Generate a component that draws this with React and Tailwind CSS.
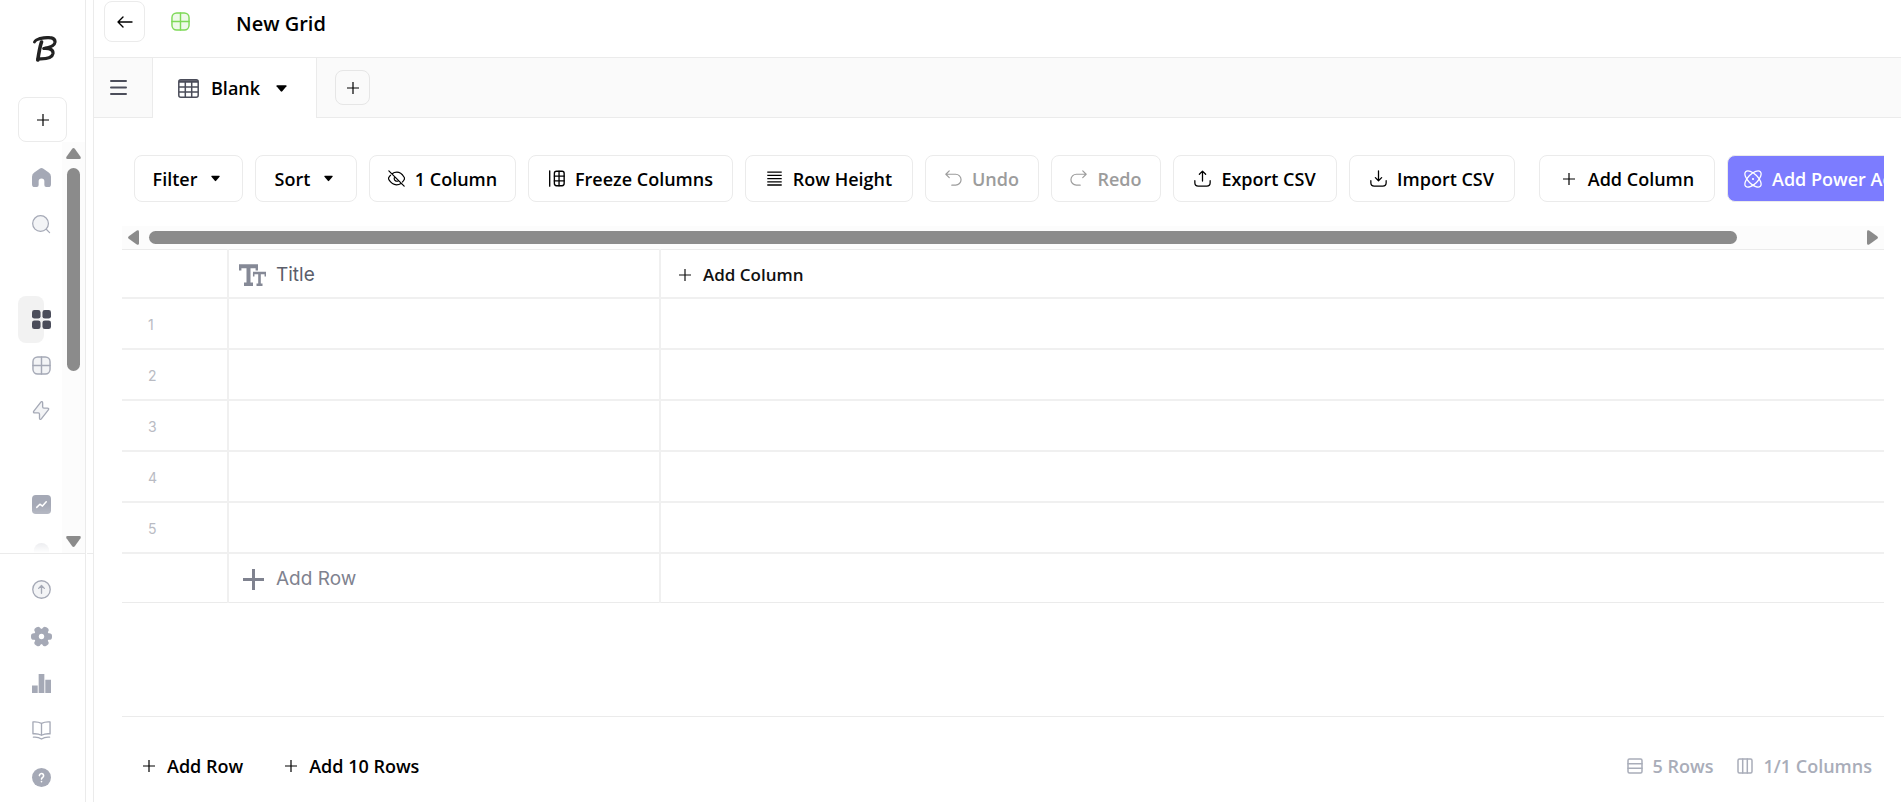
import React, { useState } from "react";

function Svg({ size = 20, children, className = "", box = 20, ...rest }) {
  return (
    <svg
      width={size}
      height={size}
      viewBox={`0 0 ${box} ${box}`}
      fill="none"
      stroke="currentColor"
      strokeLinecap="round"
      strokeLinejoin="round"
      aria-hidden="true"
      className={`shrink-0 ${className}`}
      {...rest}
    >
      {children}
    </svg>
  );
}

const Plus = ({ size = 12, width = 1.2 }) => (
  <Svg size={size} box={12} strokeWidth={width} strokeLinecap="butt">
    <path d="M6 0v12M0 6h12" />
  </Svg>
);

const Caret = ({ size = 9 }) => (
  <Svg size={size} box={10} stroke="none">
    <path d="M1 2h8q1 0 .5 1L5.700 7.600q-.7.700-1.400 0L.5 3Q0 2 1 2z" fill="currentColor" />
  </Svg>
);

const Triangle = ({ className = "" }) => (
  <svg width="15" height="11" viewBox="0 0 15 11" aria-hidden="true" className={`shrink-0 ${className}`}>
    <path d="M6.200.8q1.300-1.500 2.600 0l5.700 8q.9 2-1 2.200h-12q-1.900-.2-1-2.200z" fill="#8b8b8b" />
  </svg>
);

const GridIcon = () => (
  <Svg size={19} strokeWidth="1.500">
    <rect x="1" y="1" width="18" height="18" rx="5" fill="currentColor" fillOpacity="0.130" />
    <path d="M10 1v18M1 10h18" />
  </Svg>
);

const HomeIcon = () => (
  <Svg size={19} stroke="none">
    <path
      d="M8 .8a3.500 3.500 0 0 1 4 0l5.600 4A5.500 5.500 0 0 1 20 9.300V17a3 3 0 0 1-3 3h-2a2 2 0 0 1-2-2v-4a3 3 0 0 0-6 0v4a2 2 0 0 1-2 2H3a3 3 0 0 1-3-3V9.300a5.500 5.500 0 0 1 2.400-4.500z"
      fill="currentColor"
    />
  </Svg>
);

const SearchIcon = () => (
  <Svg size={19} strokeWidth="1.300">
    <circle cx="9" cy="9" r="8.300" fill="currentColor" fillOpacity="0.130" />
    <path d="M15 15l3.500 3.500" />
  </Svg>
);

const AppsIcon = () => (
  <Svg size={19} stroke="none">
    <g fill="#4b4d5a">
      <rect width="9" height="9" rx="2.500" />
      <rect x="11" width="9" height="9" rx="2.500" />
      <rect y="11" width="9" height="9" rx="2.500" />
      <rect x="11" y="11" width="9" height="9" rx="2.500" />
    </g>
  </Svg>
);

const BoltIcon = () => (
  <Svg size={19} strokeWidth="1.400">
    <path
      d="M9.300 1.200c.9-1 1.900-.5 1.900.7v4.200q0 1.400 1.300 1.400h3.700c1.300 0 1.700.9 1 1.800l-7.400 9.500c-.9 1-1.900.5-1.900-.7v-4.200q0-1.400-1.300-1.400H2.900c-1.300 0-1.700-.9-1-1.800z"
      fill="currentColor"
      fillOpacity="0.130"
    />
  </Svg>
);

const ChartIcon = () => (
  <Svg size={19} strokeWidth="1.600">
    <rect width="20" height="20" rx="4" fill="currentColor" stroke="none" />
    <path d="M5 13l3.300-3.300 2.700 2 4-4.500" stroke="#fff" />
  </Svg>
);

const DotIcon = () => (
  <Svg size={19} stroke="none">
    <circle cx="10" cy="10" r="8" fill="currentColor" />
  </Svg>
);

const UpgradeIcon = () => (
  <Svg size={19} strokeWidth="1.400">
    <circle cx="10" cy="10" r="9.200" fill="currentColor" fillOpacity="0.130" />
    <path d="M10 14V6M7 8.800L10 5.800l3 3" />
  </Svg>
);

const GearIcon = () => (
  <Svg size={21} box={22} stroke="none">
    <g fill="currentColor">
      <circle cx="11" cy="11" r="8" />
      <rect x="0" y="7.500" width="22" height="7" rx="3" />
      <rect x="0" y="7.500" width="22" height="7" rx="3" transform="rotate(60 11 11)" />
      <rect x="0" y="7.500" width="22" height="7" rx="3" transform="rotate(120 11 11)" />
    </g>
    <circle cx="11" cy="11" r="2.800" fill="#fff" />
  </Svg>
);

const BarsIcon = () => (
  <Svg size={19} stroke="none">
    <path d="M0 12h6v8H0zM7 0h6v20H7zM14 6h6v14h-6z" fill="currentColor" />
  </Svg>
);

const BookIcon = () => (
  <Svg size={19} strokeWidth="1.400">
    <path d="M10 2.500Q6 .5 1 1v12.500q5-.5 9 1.500 4-2 9-1.500V1q-5-.5-9 1.500zM10 2.500V15M1.500 17q5-.5 8.500 2 3.500-2.500 8.500-2" />
  </Svg>
);

const HelpIcon = () => (
  <Svg size={19} strokeWidth="1.700">
    <circle cx="10" cy="10" r="10" fill="currentColor" stroke="none" />
    <path d="M7.800 8a2.200 2.200 0 1 1 3.400 1.900Q10 10.500 10 11.700M10 14.300v.1" stroke="#fff" />
  </Svg>
);

const EyeOffIcon = () => (
  <Svg size={17} strokeWidth="1.400">
    <path d="M5 4.400Q7 2.600 10.500 2.600c4 0 6.200 2.400 8.300 5.600q1.200 1.800 0 3.600-.8 1.300-1.800 2.300M3 6.200Q2 7.200 1.200 8.300q-1.100 1.700 0 3.400c2 3.200 4.800 5.700 8.800 5.700q3 0 5.200-1.500M1 1l18 18M7.500 9q-.7 2.700 1.400 3.800 1.400.8 3 .1M9.500 9.500l1.600 1.600" />
  </Svg>
);

const FreezeIcon = () => (
  <Svg size={17} strokeWidth="1.600">
    <path d="M2 1v18M13 1.500v17M7.500 7.200h11.500M7.500 12.800h11.500" />
    <rect x="7.500" y="1.500" width="11.500" height="17" rx="2.500" />
  </Svg>
);

const RowHeightIcon = () => (
  <Svg size={17} strokeWidth="1.600" strokeLinecap="butt">
    <path d="M1.500 2.500h17M1.500 6.300h17M1.500 10.100h17M1.500 13.900h17M1.500 17.700h17" />
  </Svg>
);

const UndoIcon = ({ className = "" }) => (
  <Svg size={17} strokeWidth="1.400" className={className}>
    <path d="M5 1L1 5l4 4M1.500 5H12.500a6.200 6.200 0 0 1 0 12.800H8" />
  </Svg>
);

const ExportIcon = () => (
  <Svg size={17} strokeWidth="1.500">
    <path d="M1 12.500v2.500q0 4 4 4h10q4 0 4-4v-2.500M10 13V1.500M6.300 5L10 1.300 13.700 5" />
  </Svg>
);

const ImportIcon = () => (
  <Svg size={17} strokeWidth="1.500">
    <path d="M1 12.500v2.500q0 4 4 4h10q4 0 4-4v-2.500M10 1v11.500M6.300 9L10 12.700 13.700 9" />
  </Svg>
);

const AtomIcon = () => (
  <Svg size={18} strokeWidth="1.400">
    <ellipse cx="10" cy="10" rx="11.500" ry="5.500" transform="rotate(45 10 10)" />
    <ellipse cx="10" cy="10" rx="11.500" ry="5.500" transform="rotate(-45 10 10)" />
    <circle cx="10" cy="10" r="1.200" fill="currentColor" stroke="none" />
  </Svg>
);

const TextTypeIcon = () => (
  <svg width="27" height="22" viewBox="0 0 27 22" aria-hidden="true" className="shrink-0" stroke="#858996" fill="none">
    <path d="M0 2.200h19M9.500 2v19M5 20.500h9" strokeWidth="4" />
    <path d="M1.200 2v4.500M17.800 2v4.500" strokeWidth="2.400" />
    <path d="M14 9h13M20.500 9v12M17.500 20.800h6" strokeWidth="2.600" />
    <path d="M14.700 9v3.500M26.300 9v3.500" strokeWidth="1.500" />
  </svg>
);

const TableIcon = () => (
  <svg width="21" height="19" viewBox="0 0 21 19" aria-hidden="true" className="shrink-0" stroke="#4b4d5a" fill="none" strokeWidth="1.500">
    <rect x=".8" y=".8" width="19.400" height="17.400" rx="2" />
    <path d="M1 2.500h19" strokeWidth="2.500" />
    <path d="M7.300 3v15M13.700 3v15M1 8h19M1 13h19" />
  </svg>
);

const RowsIcon = ({ className = "" }) => (
  <Svg size={16} box={16} strokeWidth="1.500" className={className}>
    <rect x="1" y="1" width="14" height="14" rx="1.500" />
    <path d="M1 5.700h14M1 10.300h14" />
  </Svg>
);

const mainNav = [
  { label: "Home", Icon: HomeIcon, cell: "h-[47px]" },
  { label: "Search", Icon: SearchIcon, cell: "h-[47px] mb-12" },
  { label: "Apps", Icon: AppsIcon, cell: "h-[47px] rounded-lg bg-[#f2f2f2]" },
  { label: "Grids", Icon: GridIcon, cell: "h-[45px]" },
  { label: "Automations", Icon: BoltIcon, cell: "h-[45px] mb-12" },
  { label: "Analytics", Icon: ChartIcon, cell: "h-[47px]" },
  { label: "More", Icon: DotIcon, cell: "h-[45px]" },
];

const footerNav = [
  { label: "Upgrade", Icon: UpgradeIcon },
  { label: "Settings", Icon: GearIcon },
  { label: "Usage", Icon: BarsIcon },
  { label: "Docs", Icon: BookIcon },
  { label: "Help", Icon: HelpIcon },
];

function Sidebar() {
  return (
    <aside className="flex w-[94px] shrink-0 border-r border-[#ebebeb] text-[#a5a9b6]">
      <div className="flex w-[86px] flex-col border-r border-[#ebebeb]">
        <div className="flex h-[97px] shrink-0 items-center pl-[33px]">
          <svg width="24" height="26" viewBox="0 0 24 26" role="img" aria-label="Logo" fill="none" stroke="#222" strokeLinecap="round" strokeLinejoin="round">
            <path d="M1.500 6Q2.500 3.500 8 2.500" strokeWidth="2.800" />
            <path d="M7 2.500Q22.500-.5 22 6.200 21.500 11 11 12.500" strokeWidth="3.200" />
            <path d="M11 12.500q9.500-.5 9 5Q19 23.500 5 22.800" strokeWidth="3.200" />
            <path d="M8.500 6Q6.500 12 4.800 24" strokeWidth="3.600" />
          </svg>
        </div>
        <button
          type="button"
          aria-label="Create"
          className="ml-[18px] flex h-[45px] w-[49px] shrink-0 items-center justify-center rounded-lg border border-[#ebebeb] text-black"
        >
          <Plus />
        </button>

        <div className="relative flex min-h-0 flex-1 overflow-hidden">
          <nav className="flex flex-1 flex-col pt-3 pl-[18px]">
            {mainNav.map(({ label, Icon, cell }) => (
              <a key={label} href="#" aria-label={label} className={`flex w-[26px] shrink-0 items-center pl-[14px] ${cell}`}>
                <Icon />
              </a>
            ))}
          </nav>
          <div className="absolute inset-x-0 bottom-0 h-12 bg-linear-to-t from-white to-transparent" />
          <div className="relative flex w-[23px] flex-col items-center bg-[#fcfcfc] py-[6px]">
            <Triangle />
            <div className="mt-[9px] h-[203px] w-[13px] rounded-full bg-[#8b8b8b]" />
            <Triangle className="mt-auto rotate-180" />
          </div>
        </div>

        <nav className="flex shrink-0 flex-col border-t border-[#ebebeb] pt-3 pb-px">
          {footerNav.map(({ label, Icon }) => (
            <a key={label} href="#" aria-label={label} className="flex h-[47px] w-[83px] items-center justify-center">
              <Icon />
            </a>
          ))}
        </nav>
      </div>
      <div className="ml-px flex flex-1 flex-col justify-end">
        <div className="h-[249px] border-t border-[#ebebeb]" />
      </div>
    </aside>
  );
}

function ToolButton({ icon, children, caret, disabled, className = "" }) {
  return (
    <button
      type="button"
      disabled={disabled}
      className={`flex h-[47px] shrink-0 items-center justify-center gap-[10px] rounded-lg border border-[#ebebeb] px-4 whitespace-nowrap disabled:text-[#9c9c9c] ${className}`}
    >
      {icon}
      {children}
      {caret && (
        <span className="px-1">
          <Caret />
        </span>
      )}
    </button>
  );
}

function Toolbar() {
  return (
    <div className="flex h-[108px] shrink-0 items-center gap-3 overflow-hidden pt-[13px] pl-3 text-lg font-semibold">
      <ToolButton caret className="min-w-[109px]">Filter</ToolButton>
      <ToolButton caret className="min-w-[102px]">Sort</ToolButton>
      <ToolButton icon={<EyeOffIcon />} className="min-w-[147px]">1 Column</ToolButton>
      <ToolButton icon={<FreezeIcon />} className="min-w-[205px]">Freeze Columns</ToolButton>
      <ToolButton icon={<RowHeightIcon />} className="min-w-[168px]">Row Height</ToolButton>
      <ToolButton icon={<UndoIcon />} disabled className="min-w-[114px]">Undo</ToolButton>
      <ToolButton icon={<UndoIcon className="-scale-x-100" />} disabled className="min-w-[110px]">Redo</ToolButton>
      <ToolButton icon={<ExportIcon />} className="min-w-[164px]">Export CSV</ToolButton>
      <ToolButton icon={<ImportIcon />} className="min-w-[166px]">Import CSV</ToolButton>
      <ToolButton icon={<span className="px-[3px]"><Plus /></span>} className="ml-3 min-w-[176px]">Add Column</ToolButton>
      <ToolButton icon={<AtomIcon />} className="border-[#7c7cff] bg-[#7c7cff] text-white">Add Power Action</ToolButton>
    </div>
  );
}

function GridTable({ rows, onAddRow }) {
  return (
    <table className="w-full table-fixed border-collapse border-t border-[#ebebeb] text-left">
      <colgroup>
        <col className="w-[106px]" />
        <col className="w-[432px]" />
        <col />
      </colgroup>
      <thead>
        <tr className="h-[48px] border-b-2 border-[#f0f0f0]">
          <th aria-label="Row number" />
          <th className="border-x-2 border-[#f0f0f0] px-[10px] pt-[3px] font-['Inter',sans-serif] text-[19px] font-normal text-[#5b5e6b]">
            <span className="flex items-center gap-[10px]">
              <TextTypeIcon />
              Title
            </span>
          </th>
          <th className="px-[18px] pt-[3px] text-[17px] font-semibold text-[#111]">
            <button type="button" className="flex items-center gap-3">
              <Plus />
              Add Column
            </button>
          </th>
        </tr>
      </thead>
      <tbody>
        {rows.map((row) => (
          <tr key={row} className="h-[51px] border-b-2 border-[#f0f0f0]">
            <td className="pt-[3px] pl-[26px] font-['Inter',sans-serif] text-sm text-[#b9bbc3]">{row}</td>
            <td className="border-x-2 border-[#f0f0f0]" />
            <td />
          </tr>
        ))}
        <tr className="h-[50px] border-b border-[#ebebeb]">
          <td />
          <td className="border-x-2 border-[#f0f0f0] px-[14px] pt-[3px] font-['Inter',sans-serif] text-[19px] text-[#7f828f]">
            <button type="button" onClick={onAddRow} className="flex items-center gap-3">
              <Plus size={21} width={1.7} />
              Add Row
            </button>
          </td>
          <td />
        </tr>
      </tbody>
    </table>
  );
}

export default function App() {
  const [rows, setRows] = useState([1, 2, 3, 4, 5]);

  const addRows = (count) => {
    setRows((prev) => [...prev, ...Array.from({ length: count }, (_, i) => prev.length + i + 1)]);
  };

  return (
    <div className="flex h-screen overflow-hidden bg-white font-['Open_Sans','Noto_Sans',sans-serif] text-black">
      <Sidebar />

      <main className="flex min-w-0 flex-1 flex-col">
        {/* HEADER */}
        <header className="flex h-[57px] shrink-0 items-start pt-px pl-[10px]">
          <button type="button" aria-label="Back" className="flex size-[41px] items-center justify-center rounded-lg border border-[#ebebeb]">
            <Svg size={16} box={16} strokeWidth="1.400">
              <path d="M15 8H1M6 3L1 8l5 5" />
            </Svg>
          </button>
          <span className="ml-[26px] flex h-[41px] items-center text-[#7ed957]">
            <GridIcon />
          </span>
          <h1 className="ml-[46px] text-xl leading-[46px] font-semibold">New Grid</h1>
        </header>

        {/* TABS */}
        <div className="flex h-[61px] shrink-0 border-t border-[#ebebeb] bg-[#fafafa]">
          <button type="button" aria-label="Menu" className="flex w-[59px] items-center border-r border-b border-[#ebebeb] pl-4 text-[#4b4d5a]">
            <Svg size={17} box={17} strokeWidth="2">
              <path d="M1 2h15M1 8.500h15M1 15h15" />
            </Svg>
          </button>
          <button type="button" className="flex min-w-[163px] items-center gap-3 bg-white px-[25px] text-lg font-semibold">
            <TableIcon />
            Blank
            <span className="px-1">
              <Caret size={11} />
            </span>
          </button>
          <div className="flex flex-1 items-center border-b border-l border-[#ebebeb] pl-[18px]">
            <button type="button" aria-label="Add tab" className="flex size-[35px] items-center justify-center rounded-lg border border-[#e6e6e6]">
              <Plus />
            </button>
          </div>
        </div>

        <div className="flex min-h-0 flex-1 flex-col pr-[17px] pl-7">
          <Toolbar />

          <div className="flex h-[23px] shrink-0 items-center bg-[#fcfcfc] px-1">
            <Triangle className="-rotate-90" />
            <div className="mx-2 flex-1">
              <div className="h-[13px] w-[93%] rounded-full bg-[#8b8b8b]" />
            </div>
            <Triangle className="rotate-90" />
          </div>

          <div className="min-h-0 flex-1 overflow-hidden">
            <GridTable rows={rows} onAddRow={() => addRows(1)} />
          </div>

          {/* FOOTER */}
          <footer className="flex h-[86px] shrink-0 items-center border-t border-[#ebebeb] pt-3 pr-3 pl-[21px] text-lg font-semibold">
            <button type="button" onClick={() => addRows(1)} className="flex items-center gap-3">
              <Plus />
              Add Row
            </button>
            <button type="button" onClick={() => addRows(10)} className="ml-[42px] flex items-center gap-3">
              <Plus />
              Add 10 Rows
            </button>
            <div className="ml-auto flex items-center gap-6 text-[#a9adb9]">
              <span className="flex items-center gap-[10px]">
                <RowsIcon />
                {rows.length} Rows
              </span>
              <span className="flex items-center gap-[10px]">
                <RowsIcon className="rotate-90" />
                1/1 Columns
              </span>
            </div>
          </footer>
        </div>
      </main>
    </div>
  );
}
